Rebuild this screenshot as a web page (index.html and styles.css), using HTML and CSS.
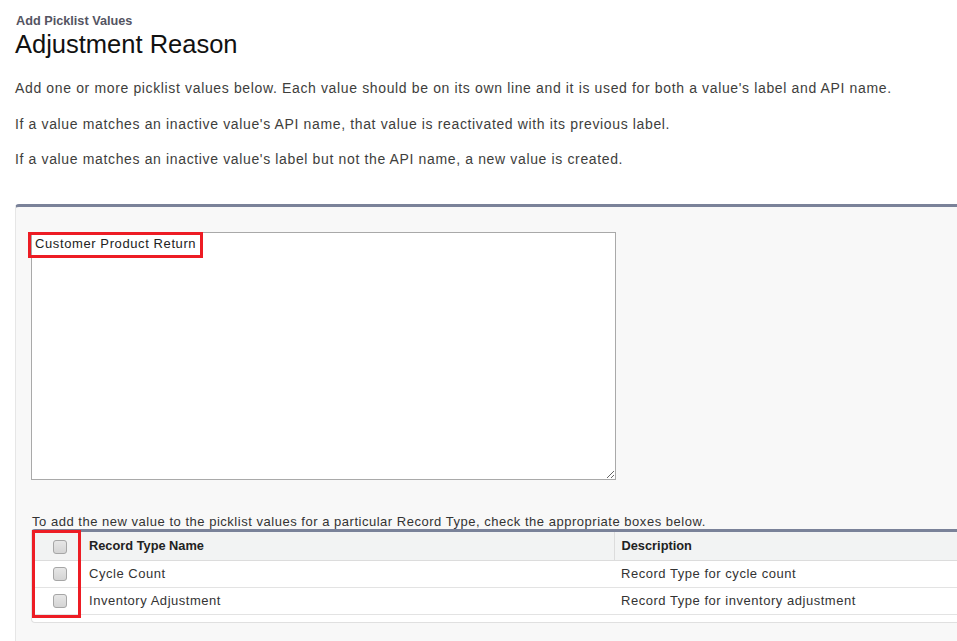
FILE: index.html
```html
<!DOCTYPE html>
<html lang="en">
<head>
    <meta charset="UTF-8">
    <title>Add Picklist Values</title>
    <link rel="stylesheet" href="styles.css">
</head>
<body>
    <div class="page-header">
        <div class="page-type">Add Picklist Values</div>
        <h1 class="page-title">Adjustment Reason</h1>
    </div>
    <div class="intro">
        <p>Add one or more picklist values below. Each value should be on its own line and it is used for both a value's label and API name.</p>
        <p>If a value matches an inactive value's API name, that value is reactivated with its previous label.</p>
        <p>If a value matches an inactive value's label but not the API name, a new value is created.</p>
    </div>
    <div class="panel">
        <div class="values-wrap">
            <textarea class="values">Customer Product Return</textarea>
            <div class="mark mark-value"></div>
        </div>
        <div class="hint">To add the new value to the picklist values for a particular Record Type, check the appropriate boxes below.</div>
        <div class="rt-wrap">
            <table class="rt-table">
                <thead>
                    <tr>
                        <th class="col-check"><span class="check"></span></th>
                        <th class="col-name">Record Type Name</th>
                        <th class="col-desc">Description</th>
                    </tr>
                </thead>
                <tbody>
                    <tr>
                        <td class="col-check"><span class="check"></span></td>
                        <td class="col-name">Cycle Count</td>
                        <td class="col-desc">Record Type for cycle count</td>
                    </tr>
                    <tr>
                        <td class="col-check"><span class="check"></span></td>
                        <td class="col-name">Inventory Adjustment</td>
                        <td class="col-desc">Record Type for inventory adjustment</td>
                    </tr>
                </tbody>
            </table>
            <div class="mark mark-checks"></div>
        </div>
    </div>
</body>
</html>
```

FILE: styles.css
```css
* {
    margin: 0;
    padding: 0;
    box-sizing: border-box;
}

body {
    font-family: "Liberation Sans", Arial, sans-serif;
    color: #333;
    background: #fff;
    overflow: hidden;
}

.page-header {
    padding: 14px 0 0 16px;
}

.page-type {
    font-size: 12.7px;
    font-weight: bold;
    color: #545462;
    line-height: 15px;
}

.page-title {
    font-size: 25.5px;
    font-weight: normal;
    color: #111;
    line-height: 30px;
    margin-left: -1px;
}

.intro {
    padding: 21px 0 0 15px;
}

.intro p {
    font-size: 14px;
    line-height: 16px;
    letter-spacing: 0.64px;
    color: #3e3e3c;
    margin-bottom: 19.5px;
}

.panel {
    margin: 37px 0 0 15px;
    width: 960px;
    height: 460px;
    background: #f8f8f8;
    border-top: 3px solid #7a8299;
    border-left: 1px solid #e6e6e6;
    border-top-left-radius: 4px;
    padding: 25px 0 0 15px;
}

.values-wrap {
    position: relative;
    width: 585px;
    height: 248px;
}

.values {
    display: block;
    width: 585px;
    height: 248px;
    border: 1px solid #a9a9a9;
    background: #fff;
    font-family: "Liberation Sans", Arial, sans-serif;
    font-size: 13px;
    letter-spacing: 0.6px;
    color: #222;
    padding: 3px 3px;
    line-height: 16px;
    resize: both;
}

.mark {
    position: absolute;
    border: 3px solid #ed1c24;
    pointer-events: none;
}

.mark-value {
    left: -3px;
    top: 0;
    width: 175px;
    height: 26px;
}

.hint {
    font-size: 13px;
    letter-spacing: 0.52px;
    color: #333;
    margin-top: 34px;
    line-height: 15px;
    padding-left: 1px;
}

.rt-wrap {
    position: relative;
    background: #fff;
    border-top: 3px solid #7a8299;
    border-left: 1px solid #e0e0e0;
    border-bottom: 1px solid #e0e0e0;
    border-radius: 4px 0 0 4px;
    height: 94px;
}

.rt-table {
    width: 100%;
    border-collapse: collapse;
    font-size: 13px;
}

.rt-table th {
    background: #f2f3f3;
    height: 28px;
    text-align: left;
    font-weight: bold;
    font-size: 12.8px;
    color: #222;
    border-bottom: 1px solid #dcdcdc;
}

.rt-table td {
    height: 27px;
    background: #fff;
    color: #333;
    letter-spacing: 0.53px;
    border-bottom: 1px solid #e3e3e3;
}

.rt-table .col-check {
    width: 49px;
    text-align: center;
    padding: 0;
}

.col-name {
    width: 533px;
    padding-left: 8px;
}

.rt-table th.col-desc {
    border-left: 1px solid #dcdcdc;
}

.col-desc {
    padding-left: 7px;
}

.rt-table td.col-desc {
    padding-left: 7px;
}

.check {
    display: inline-block;
    width: 14px;
    height: 14px;
    border: 1px solid #a6a6a6;
    border-radius: 3px;
    background: linear-gradient(#e6e6e6, #d4d4d4);
    vertical-align: middle;
    margin-left: 6px;
}

.mark-checks {
    left: 0;
    top: -2px;
    width: 49px;
    height: 88px;
}
```
